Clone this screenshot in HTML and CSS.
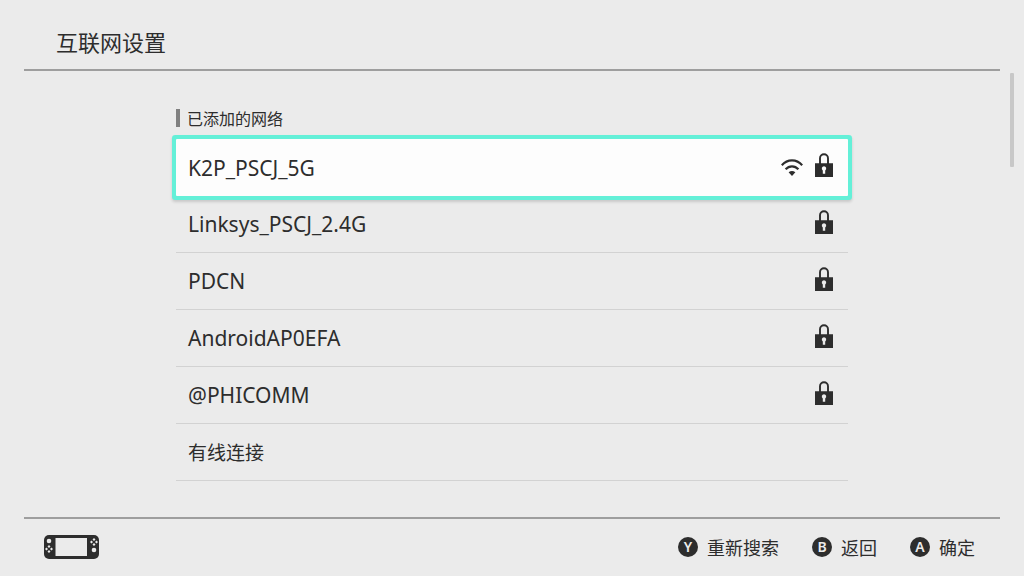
FILE: index.html
```html
<!DOCTYPE html>
<html lang="zh-CN">
<head>
<meta charset="utf-8">
<meta name="viewport" content="width=device-width, initial-scale=1">
<title>互联网设置</title>
<link rel="stylesheet" href="styles.css">
</head>
<body>
<svg class="sprite" aria-hidden="true">
  <symbol id="lock" viewBox="0 0 18 24">
    <path d="M5 11V5.200a4 4 0 0 1 8 0V11" fill="none" stroke="currentColor" stroke-width="1.900"/>
    <path fill="currentColor" fill-rule="evenodd" d="M0 10.200h18V24H0zM9 13.200a2.300 2.300 0 0 0-1.200 4.200V20.800h2.400v-3.400A2.300 2.300 0 0 0 9 13.200z"/>
  </symbol>
  <symbol id="wifi" viewBox="0 0 22 17">
    <path d="M.8 6.300Q5 1.400 11 1.400T21.200 6.300M4.600 10.300Q7.300 7.300 11 7.300T17.400 10.300" fill="none" stroke="currentColor" stroke-width="2.200"/>
    <path d="M7.600 13.300Q11 10.800 14.400 13.300L11 17z" fill="currentColor"/>
  </symbol>
</svg>
<div class="screen">
  <header class="header"><h1 class="title">互联网设置</h1></header>
  <main class="content">
    <section class="networks">
      <h2 class="section-title">已添加的网络</h2>
      <ul class="list">
        <li class="item"><button class="network selected" type="button"><span class="name">K2P_PSCJ_5G</span><svg class="wifi" role="img" aria-label="Wi-Fi"><use href="#wifi"/></svg><svg class="lock" aria-hidden="true"><use href="#lock"/></svg></button></li>
        <li class="item"><button class="network" type="button"><span class="name">Linksys_PSCJ_2.4G</span><svg class="lock" aria-hidden="true"><use href="#lock"/></svg></button></li>
        <li class="item"><button class="network" type="button"><span class="name">PDCN</span><svg class="lock" aria-hidden="true"><use href="#lock"/></svg></button></li>
        <li class="item"><button class="network" type="button"><span class="name">AndroidAP0EFA</span><svg class="lock" aria-hidden="true"><use href="#lock"/></svg></button></li>
        <li class="item"><button class="network" type="button"><span class="name">@PHICOMM</span><svg class="lock" aria-hidden="true"><use href="#lock"/></svg></button></li>
        <li class="item"><button class="network" type="button"><span class="name wired">有线连接</span></button></li>
      </ul>
    </section>
    <div class="scrollbar"></div>
  </main>
  <footer class="footer">
    <svg class="console" viewBox="0 0 55 24" aria-hidden="true">
      <rect width="55" height="24" rx="5" fill="#2d2d2d"/>
      <rect x="11.500" y="3" width="31.500" height="18" fill="#ebebeb"/>
      <g fill="#ebebeb">
        <circle cx="5" cy="6" r="2.300"/>
        <path d="M5 10l1.500 1.500L5 13l-1.500-1.500zM5 15l1.500 1.500L5 18l-1.500-1.500zM2.500 12.500L4 14l-1.500 1.500L1 14zM7.500 12.500L9 14l-1.500 1.500L6 14z"/>
        <path d="M50 3l1.500 1.500L50 6l-1.500-1.500zM50 8l1.500 1.500L50 11l-1.500-1.500zM47.500 5.500L49 7l-1.500 1.500L46 7zM52.500 5.500L54 7l-1.500 1.500L51 7z"/>
        <circle cx="50" cy="15" r="2.300"/>
      </g>
    </svg>
    <nav class="actions">
      <button class="action" type="button"><span class="key">Y</span>重新搜索</button>
      <button class="action" type="button"><span class="key">B</span>返回</button>
      <button class="action" type="button"><span class="key">A</span>确定</button>
    </nav>
  </footer>
</div>
</body>
</html>
```
FILE: styles.css
```css
* { box-sizing: border-box; }
body {
  margin: 0;
  background: #ebebeb;
  color: #2d2d2d;
  font-family: "Noto Sans", "Noto Sans CJK SC", sans-serif;
}
button {
  border: 0;
  padding: 0;
  background: none;
  color: inherit;
  font: inherit;
}
.sprite { display: none; }
.screen {
  display: flex;
  flex-direction: column;
  min-height: 100vh;
  padding: 0 24px;
}
.header {
  padding: 25px 32px 12px;
  border-bottom: 2px solid #9e9e9e;
}
.title {
  margin: 0;
  font: 400 22px/32px "Noto Sans CJK SC", sans-serif;
}
.content {
  flex: 1;
  position: relative;
  padding: 38px 152px 24px;
}
.section-title {
  margin: 0 0 12px;
  padding-left: 7px;
  border-left: 4px solid #808080;
  font: 400 16px/18px "Noto Sans CJK SC", sans-serif;
}
.list {
  margin: 0;
  padding: 0;
  list-style: none;
}
.network {
  display: flex;
  align-items: center;
  gap: 12px;
  width: 100%;
  height: 57px;
  padding: 0 15px 0 12px;
  border-bottom: 1px solid #d2d2d2;
  font-size: 21px;
  line-height: 30px;
  text-align: left;
}
.selected {
  border-bottom: 0;
  background: #fdfdfd;
  box-shadow: 0 0 0 4px #64f0d8, 0 2px 3px 4px #00000026;
  border-radius: 1px;
}
.name { flex: 1; }
.wired { font: 400 19px/28px "Noto Sans CJK SC", sans-serif; }
.wifi { width: 22px; height: 17px; }
.lock { width: 18px; height: 24px; margin-bottom: 5px; }
.scrollbar {
  position: absolute;
  top: 2px;
  right: -14px;
  width: 4px;
  height: 94px;
  border-radius: 1px;
  background: #c8c8c8;
}
.footer {
  display: flex;
  align-items: center;
  justify-content: space-between;
  height: 59px;
  padding: 0 25px 2px 20px;
  border-top: 2px solid #9e9e9e;
}
.console { width: 55px; height: 24px; }
.actions { display: flex; gap: 33px; }
.action {
  display: flex;
  align-items: center;
  gap: 9px;
  font: 400 18px/26px "Noto Sans CJK SC", sans-serif;
}
.key {
  width: 20px;
  border-radius: 50%;
  background: #2d2d2d;
  color: #ebebeb;
  font: 600 14px/20px "Noto Sans", sans-serif;
  text-align: center;
}
```
